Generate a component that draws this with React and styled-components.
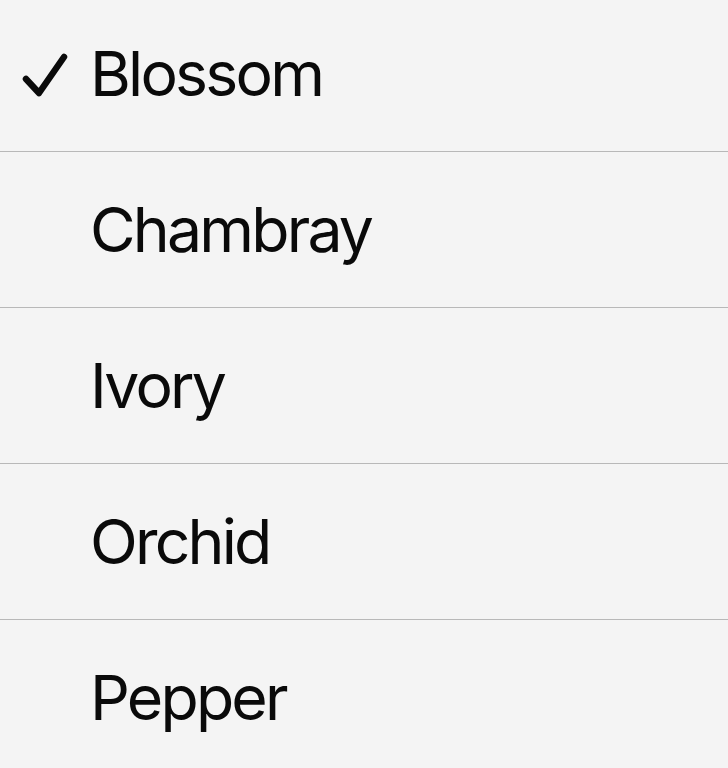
import React from "react";
import styled, { createGlobalStyle } from "styled-components";

const Global = createGlobalStyle`
  html, body { margin: 0; padding: 0; background: #f4f4f4; }
  body { font-family: Inter, "Noto Sans", sans-serif; overflow: hidden; }
`;

const Panel = styled.div`
  background: #f4f4f4;
  height: 768px;
  overflow: hidden;
`;

const List = styled.ul`
  list-style: none;
  margin: -4px 0 0 0;
  padding: 0;
`;

const Row = styled.li`
  display: grid;
  grid-template-columns: 90px 1fr;
  align-items: center;
  height: 155px;
  border-bottom: 1px solid #b8b8b8;
  &:last-child { border-bottom: none; }
`;

const CheckCell = styled.div`
  display: flex;
  align-items: center;
  padding-left: 22px;
  height: 100%;
`;

const Label = styled.span`
  font-size: 62.5px;
  font-weight: 400;
  color: #0a0a0a;
  letter-spacing: -2.8px;
  line-height: 1;
`;

const Check = () => (
  <svg width="48" height="48" viewBox="0 0 48 48" style={{ marginTop: 2 }}>
    <path
      d="M4 28 L17 42 L42 6"
      fill="none"
      stroke="#0a0a0a"
      strokeWidth="6.5"
      strokeLinecap="round"
      strokeLinejoin="round"
    />
  </svg>
);

const items = ["Blossom", "Chambray", "Ivory", "Orchid", "Pepper"];

export default function App() {
  return (
    <Panel>
      <Global />
      <List>
        {items.map((name, i) => (
          <Row key={name}>
            <CheckCell>{i === 0 ? <Check /> : null}</CheckCell>
            <Label>{name}</Label>
          </Row>
        ))}
      </List>
    </Panel>
  );
}
